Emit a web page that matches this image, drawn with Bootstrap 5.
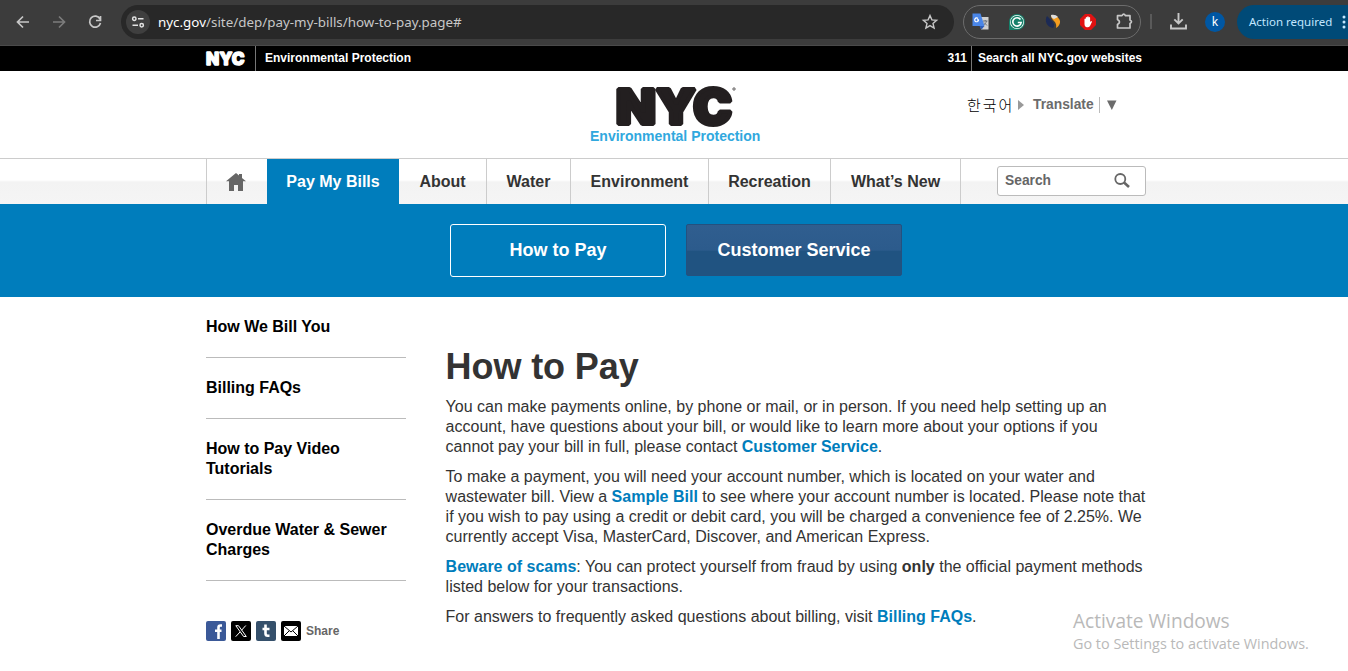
<!DOCTYPE html>
<html lang="en">

<head>
    <meta charset="UTF-8">
    <meta name="viewport" content="width=device-width, initial-scale=1.0">
    <title>DEP - How to Pay</title>
    <!-- Bootstrap CSS -->
    <link href="https://cdn.jsdelivr.net/npm/bootstrap@5.3.0/dist/css/bootstrap.min.css" rel="stylesheet">
    <style>
        body {
            font: 16px/20px "Liberation Sans", Arial, sans-serif;
            color: #333;
            height: 671px;
            overflow: hidden;
        }

        a {
            text-decoration: none;
        }

        svg {
            display: block;
            flex: none;
            overflow: visible;
        }

        /* Browser toolbar */
        .browser-bar {
            height: 46px;
            padding-bottom: 2px;
            background: #3c3c3c;
            border-bottom: 1px solid #4a4a4a;
            font-family: "Noto Sans", "Open Sans", sans-serif;
            color: #c7c7c7;
            overflow: hidden;
        }

        .browser-bar > * {
            flex-shrink: 0;
        }

        .nav-icons {
            width: 121px;
            padding-left: 15px;
            gap: 20px;
        }

        .address {
            width: 833px;
            height: 34px;
            border-radius: 17px;
            padding: 0 16px 0 5px;
            background: #282828;
            font-size: 13.4px;
        }

        .address b {
            font-weight: 400;
            color: #fff;
        }

        .site-info {
            width: 24px;
            height: 24px;
            background: #3f3f3f;
            margin-right: 8px;
        }

        .extensions {
            width: 178px;
            height: 34px;
            margin-left: 9px;
            padding: 0 7px 0 8px;
            border: 1px solid #6c6c6c;
            border-radius: 17px;
        }

        .bar-divider {
            width: 2px;
            height: 15px;
            margin: 0 18px 0 9px;
            background: #5a5a5a;
        }

        .profile {
            width: 20px;
            height: 20px;
            margin-left: 18px;
            background: #0057a3;
            color: #fff;
            font-size: 12px;
        }

        .action-btn {
            width: 130px;
            height: 34px;
            margin-left: 12px;
            padding-left: 12px;
            border-radius: 17px 0 0 17px;
            background: #004a77;
            color: #c2e7ff;
            font-size: 11.500px;
            white-space: nowrap;
        }

        /* NYC.gov strip */
        .page-wrap {
            width: 940px;
            margin-left: 206px;
        }

        .nyc-strip {
            height: 25px;
            background: #000;
            color: #fff;
            font-size: 12px;
            font-weight: 700;
        }

        .strip-item {
            height: 25px;
            line-height: 24px;
            padding: 0 4px 0 6px;
        }

        .strip-name {
            padding-left: 9px;
        }

        .strip-line {
            border-left: 1px solid #777;
        }

        .logo-text {
            font-family: Inter, "Liberation Sans", sans-serif;
            font-weight: 900;
            stroke-linejoin: bevel;
        }

        /* Agency header */
        .agency-header {
            height: 87px;
        }

        .agency-logo {
            width: 172px;
            margin-left: 384px;
            padding-top: 15px;
        }

        .agency-name {
            font-size: 14px;
            line-height: 17px;
            color: #30a8de;
            white-space: nowrap;
        }

        .translate {
            margin: 24px 0 0 205px;
            height: 20px;
            font-size: 13.8px;
            color: #6b6b6b;
        }

        .korean {
            width: 50px;
            font: 200 15px/20px "Noto Sans CJK KR", sans-serif;
            letter-spacing: 2px;
            color: #000;
        }

        /* Main nav */
        .main-nav {
            height: 46px;
            border-top: 1px solid #ccc;
            background: linear-gradient(#fff 0, #fff 21px, #f3f3f3 23px, #f5f5f5 100%);
        }

        .main-nav .tab-link {
            height: 45px;
            line-height: 45px;
            border-right: 1px solid #ccc;
            text-align: center;
            font-weight: 700;
            color: #333;
            white-space: nowrap;
        }

        .main-nav .home-link {
            width: 61px;
            padding-right: 2px;
            border-left: 1px solid #ccc;
            border-right: 0;
        }

        .main-nav .tab-active {
            width: 132px;
            background: #007dbc;
            color: #fff;
            border-right: 0;
        }

        .tab-about {
            width: 88px;
        }

        .tab-water {
            width: 84px;
        }

        .tab-env {
            width: 138px;
        }

        .tab-rec {
            width: 122px;
        }

        .tab-new {
            width: 130px;
        }

        .search-box {
            width: 149px;
            height: 30px;
            margin: 7px 0 0 36px;
            padding: 0 15px 0 7px;
            border: 1px solid #bbb;
            border-radius: 3px;
            background: #fff;
            font-size: 13.8px;
            font-weight: 700;
            color: #666;
        }

        /* Sub nav */
        .sub-nav {
            height: 93px;
            padding: 20px 0 0 450px;
            gap: 20px;
            background: #007dbc;
        }

        .sub-btn {
            width: 216px;
            height: 53px;
            line-height: 50px;
            border: 1px solid #fff;
            border-radius: 3px;
            text-align: center;
            font-size: 18px;
            font-weight: 700;
            color: #fff;
        }

        .sub-dark {
            height: 52px;
            border-color: #24517f;
            border-radius: 2px;
            background: linear-gradient(#305e8f 0, #2c5b8c 50%, #205381 53%, #205381 100%);
        }

        /* Content */
        .side-menu {
            width: 200px;
        }

        .side-menu a {
            display: block;
            padding: 20px 0 20px;
            border-bottom: 1px solid #bbb;
            font-weight: 700;
            color: #000;
            text-indent: 0;
            letter-spacing: -.01px;
        }

        .share-row {
            margin-top: 40px;
            gap: 5px;
            font-size: 12px;
            font-weight: 700;
            color: #666;
        }

        .main-text {
            width: 702px;
            margin-left: 39.6px;
            padding-top: 50px;
        }

        .main-text h1 {
            font-size: 36px;
            line-height: 40px;
            font-weight: 700;
            margin: 0 0 10px;
            letter-spacing: -.1px;
        }

        .main-text p {
            margin: 0 0 10px;
        }

        .main-text a {
            font-weight: 700;
            color: #007dbc;
        }

        /* Overlay that sits above the page */
        .os-notice {
            position: absolute;
            left: 1073px;
            top: 608px;
            font-family: "Open Sans", sans-serif;
            font-size: 14.4px;
            color: #b9b9b9;
            white-space: nowrap;
        }

        .os-title {
            font-size: 19.1px;
            line-height: 26px;
        }
    </style>
</head>

<body>
    <!-- Browser toolbar -->
    <div class="browser-bar d-flex align-items-center">
        <div class="nav-icons d-flex">
            <svg width="16" height="16" viewBox="0 0 16 16" fill="none" stroke="#c7c7c7" stroke-width="1.7"><path d="M14 8H3M8 2.5 2.5 8 8 13.5" /></svg>
            <svg width="16" height="16" viewBox="0 0 16 16" fill="none" stroke="#7c7c7c" stroke-width="1.7"><path d="M2 8h11M8 2.5 13.5 8 8 13.5" /></svg>
            <svg width="16" height="16" viewBox="0 0 16 16" fill="none" stroke="#c7c7c7" stroke-width="1.7"><path d="M13 5A5.5 5.5 0 1 0 13.500 9M13.500 2v4.500H9" /></svg>
        </div>
        <div class="address d-flex align-items-center">
            <span class="site-info rounded-circle d-flex align-items-center justify-content-center">
                <svg width="14" height="14" viewBox="0 0 14 14" fill="none" stroke="#e3e3e3" stroke-width="1.5"><circle cx="3.3" cy="3.7" r="1.7" /><path d="M7 3.7h5.500M1.500 10.300H7" /><circle cx="10.7" cy="10.3" r="1.7" /></svg>
            </span>
            <span><b>nyc.gov</b>/site/dep/pay-my-bills/how-to-pay.page#</span>
            <svg class="ms-auto" width="16" height="16" viewBox="0 0 16 16" fill="none" stroke="#c7c7c7" stroke-width="1.4"><path d="m8 1.500 1.900 4.400 4.700.4-3.600 3.100 1.100 4.700L8 11.600l-4.100 2.500L5 9.400 1.400 6.300l4.700-.4z" /></svg>
        </div>
        <div class="extensions d-flex align-items-center justify-content-between">
            <!-- Google Translate -->
            <svg width="17" height="17" viewBox="0 0 17 17">
                <path d="M7 4h9.500v12.500H9z" fill="#d0d0d0" />
                <path d="M.5.500h8l4 12.500H.5z" fill="#4a86e8" />
                <path d="M7.500 13h5l-3 3.500z" fill="#2e5db8" />
                <path d="M7 6.200H5v1.200h.8a1.300 1.300 0 1 1-.3-1.400l.9-.9a2.500 2.500 0 1 0 .7 2.100z" fill="#fff" />
                <path d="M11 8h4.500M13.200 7v1M14.500 8c-.5 2-1.500 3-2.700 4M12 9.500l3 3" stroke="#68707a" fill="none" />
            </svg>
            <!-- Grammarly -->
            <svg width="16" height="16" viewBox="0 0 16 16">
                <path d="M0 16V8a8 8 0 1 1 8 8z" fill="#16806a" />
                <circle cx="8" cy="8" r="7" fill="#fff" />
                <circle cx="8" cy="8" r="6.3" fill="#16806a" />
                <path d="M11.500 5.500A4.200 4.200 0 1 0 12.200 8.500H8.800" fill="none" stroke="#fff" stroke-width="1.6" />
            </svg>
            <!-- Similarweb -->
            <svg width="16" height="16" viewBox="0 0 16 16">
                <path d="M2 2C-.5 6 1 13 8 14c2-2 1-5-1-7C5 5 4 4 2 2z" fill="#1c2a55" />
                <path d="M6 1c4 0 8 2 9 6 .5 3-2 6-4 7 1-4-1-6-3-8C7 5 6 3 6 1z" fill="#f39c1f" />
                <path d="M6 1c3-.6 5 0 7 2L9 5C7 4 6 3 6 1z" fill="#ddd" />
            </svg>
            <!-- AdBlock -->
            <svg width="16" height="16" viewBox="0 0 16 16">
                <path d="M5 0h6l5 5v6l-5 5H5l-5-5V5z" fill="#e01212" />
                <path d="M4.500 7.500V5q.7-1 1.300 0V3.500q.7-1 1.400 0V2.700q.8-1 1.500 0V3.500q.7-.9 1.400 0V8l1-1q1 0 .8 1L10 12q-1 1.500-3 1.200Q4.500 13 4.500 10z" fill="#fff" />
            </svg>
            <!-- Extensions puzzle -->
            <svg width="17" height="17" viewBox="0 0 17 17" fill="none" stroke="#c7c7c7" stroke-width="1.7"><path d="M1.500 2.700H6q1.700-3 3.500 0H14V7q3 1.700 0 3.500V15H1.500V11.500q4-2.500 0-5z" stroke-linejoin="round" /></svg>
        </div>
        <div class="bar-divider"></div>
        <svg width="17" height="17" viewBox="0 0 17 17" fill="none" stroke="#c7c7c7" stroke-width="1.9"><path d="M8.500 0v10M4.300 6.300l4.200 4.200 4.200-4.200M1 11.500V15.500h15V11.500" /></svg>
        <span class="profile rounded-circle d-flex align-items-center justify-content-center">k</span>
        <div class="action-btn d-flex align-items-center">
            <span>Action required</span>
            <svg class="ms-2" width="8" height="14" viewBox="0 0 8 14" fill="#c2e7ff"><circle cx="4" cy="2" r="1.5" /><circle cx="4" cy="7" r="1.5" /><circle cx="4" cy="12" r="1.5" /></svg>
        </div>
    </div>

    <!-- NYC.gov strip -->
    <div class="nyc-strip">
        <div class="page-wrap d-flex">
            <svg width="49" height="25" viewBox="0 0 49 25">
                <text class="logo-text" x="0" y="18.800" font-size="17.500" textLength="38.500" lengthAdjust="spacingAndGlyphs" fill="#fff" stroke="#fff" stroke-width="1.300">NYC</text>
            </svg>
            <div class="strip-name strip-line strip-item">Environmental Protection</div>
            <div class="strip-item ms-auto">311</div>
            <div class="strip-item strip-line">Search all NYC.gov websites</div>
        </div>
    </div>

    <!-- Agency header -->
    <div class="agency-header">
        <div class="page-wrap d-flex">
            <div class="agency-logo">
                <svg class="mx-auto" width="120" height="42" viewBox="0 0 120 42">
                    <text class="logo-text" x="0" y="37.500" font-size="48" textLength="116" lengthAdjust="spacingAndGlyphs" fill="#231f20" stroke="#231f20" stroke-width="4">NYC</text>
                    <circle cx="118" cy="3" r="1.2" fill="none" stroke="#231f20" stroke-width=".7" />
                </svg>
                <div class="agency-name fw-bold">Environmental Protection</div>
            </div>
            <div class="translate d-flex align-items-center">
                <span class="korean">한국어</span>
                <svg width="8" height="10" viewBox="0 0 8 10"><path d="M1 0l6 5-6 5z" fill="#999" /></svg>
                <span class="fw-bold ms-2 pe-1">Translate</span>
                <svg width="20" height="16" viewBox="0 0 20 16"><path d="M1.500 0v16" stroke="#bbb" /><path d="M9 3.500h9.500l-4.700 9.500z" fill="#6b6b6b" /></svg>
            </div>
        </div>
    </div>

    <!-- Main nav -->
    <div class="main-nav">
        <div class="page-wrap d-flex">
            <a href="#" class="tab-link home-link d-flex align-items-center justify-content-center" aria-label="Home">
                <svg width="20" height="18" viewBox="0 0 20 18" fill="#666"><path d="M10 0 0 8.200h3V18h5v-6h4v6h5V8.200h3L16 5V1h-3v1.600z" /></svg>
            </a>
            <a href="#" class="tab-link tab-active">Pay My Bills</a>
            <a href="#" class="tab-link tab-about">About</a>
            <a href="#" class="tab-link tab-water">Water</a>
            <a href="#" class="tab-link tab-env">Environment</a>
            <a href="#" class="tab-link tab-rec">Recreation</a>
            <a href="#" class="tab-link tab-new">What’s New</a>
            <div class="search-box d-flex align-items-center justify-content-between">
                <span>Search</span>
                <svg width="16" height="16" viewBox="0 0 16 16" fill="none" stroke="#666"><circle cx="6.3" cy="6" r="5" stroke-width="1.8" /><path d="m10 9.500 5 4.500" stroke-width="2.6" /></svg>
            </div>
        </div>
    </div>

    <!-- Sub nav -->
    <div class="sub-nav d-flex align-items-start">
        <a href="#" class="sub-btn">How to Pay</a>
        <a href="#" class="sub-btn sub-dark">Customer Service</a>
    </div>

    <!-- Content -->
    <div class="page-wrap d-flex">
        <div class="side-menu flex-shrink-0">
            <a href="#">How We Bill You</a>
            <a href="#">Billing FAQs</a>
            <a href="#">How to Pay Video Tutorials</a>
            <a href="#">Overdue Water &amp; Sewer Charges</a>
            <div class="share-row d-flex align-items-center">
                <!-- Facebook -->
                <svg width="20" height="20" viewBox="0 0 20 20"><rect width="20" height="20" rx="2" fill="#3b5998" /><path d="M16 4.500h-1.500q-2 0-2 2V18M9 9.800h6.500" fill="none" stroke="#fff" stroke-width="2.6" /></svg>
                <!-- X -->
                <svg width="20" height="20" viewBox="0 0 20 20"><rect width="20" height="20" rx="2" fill="#000" /><path d="M4.800 4.700h2.700l7.800 10.800h-2.700zM14.800 4.500l-4.300 4.800M9 11l-4.300 4.700" fill="none" stroke="#fff" /></svg>
                <!-- Tumblr -->
                <svg width="20" height="20" viewBox="0 0 20 20"><rect width="20" height="20" rx="2" fill="#35506b" /><path d="M9.500 3.500V12.500q0 2.300 2.300 2.300H13.500M6.500 8h7" fill="none" stroke="#fff" stroke-width="2.6" /></svg>
                <!-- Email -->
                <svg width="20" height="20" viewBox="0 0 20 20"><rect width="20" height="20" rx="2" fill="#000" /><path d="M3 5h14v10H3z" fill="#fff" /><path d="m3 5 7 6 7-6M3 15l5-5M17 15l-5-5" fill="none" stroke="#000" /></svg>
                <span>Share</span>
            </div>
        </div>
        <div class="main-text flex-shrink-0">
            <h1>How to Pay</h1>
            <p>You can make payments online, by phone or mail, or in person. If you need help setting up an<br>account, have questions about your bill, or would like to learn more about your options if you<br>cannot pay your bill in full, please contact <a href="#">Customer Service</a>.</p>
            <p>To make a payment, you will need your account number, which is located on your water and<br>wastewater bill. View a <a href="#">Sample Bill</a> to see where your account number is located. Please note that<br>if you wish to pay using a credit or debit card, you will be charged a convenience fee of 2.25%. We<br>currently accept Visa, MasterCard, Discover, and American Express.</p>
            <p><a href="#">Beware of scams</a>: You can protect yourself from fraud by using <strong>only</strong> the official payment methods<br>listed below for your transactions.</p>
            <p>For answers to frequently asked questions about billing, visit <a href="#">Billing FAQs</a>.</p>
        </div>
    </div>

    <div class="os-notice">
        <div class="os-title">Activate Windows</div>
        <div>Go to Settings to activate Windows.</div>
    </div>

    <!-- Bootstrap JS -->
    <script src="https://cdn.jsdelivr.net/npm/bootstrap@5.3.0/dist/js/bootstrap.bundle.min.js"></script>
</body>

</html>
